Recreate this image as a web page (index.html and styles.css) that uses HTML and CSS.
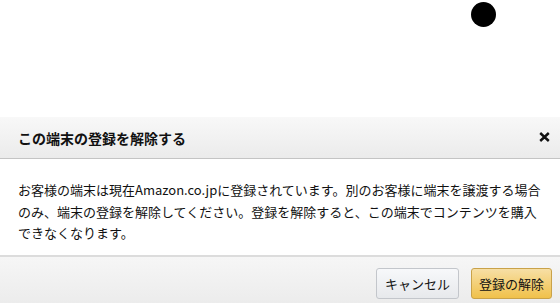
FILE: index.html
```html
<!DOCTYPE html>
<html lang="ja">
<head>
<meta charset="utf-8">
<link rel="stylesheet" href="styles.css">
</head>
<body>
<div class="page">
  <div class="top">
    <span class="dot"></span>
  </div>
  <div class="dialog">
    <div class="header">
      <h1 class="title">この端末の登録を解除する</h1>
      <svg class="close" width="11" height="10" viewBox="0 0 11 10" aria-label="閉じる"><path d="M1.2 1 L9.8 9 M9.8 1 L1.2 9" stroke="#111" stroke-width="2.4" stroke-linecap="butt" fill="none"/></svg>
    </div>
    <div class="body">
      <p class="msg">お客様の端末は現在Amazon.co.jpに登録されています。別のお客様に端末を譲渡する場合のみ、端末の登録を解除してください。登録を解除すると、この端末でコンテンツを購入できなくなります。</p>
    </div>
    <div class="footer">
      <button class="btn btn-secondary">キャンセル</button>
      <button class="btn btn-primary">登録の解除</button>
    </div>
  </div>
</div>
</body>
</html>
```

FILE: styles.css
```css
html, body {
  margin: 0;
  padding: 0;
  background: #fff;
}
body {
  font-family: "Noto Sans CJK JP", "Noto Sans", sans-serif;
  color: #111;
  width: 560px;
  height: 303px;
  overflow: hidden;
}
.page {
  display: flex;
  flex-direction: column;
  height: 303px;
}
.top {
  height: 117px;
  display: flex;
  justify-content: flex-end;
  padding: 2px 64px 0 0;
  box-sizing: border-box;
}
.dot {
  width: 25px;
  height: 25px;
  border-radius: 50%;
  background: #000;
}
.dialog {
  flex: 1;
  display: flex;
  flex-direction: column;
}
.header {
  height: 42px;
  box-sizing: border-box;
  display: flex;
  align-items: center;
  justify-content: space-between;
  padding: 0 10px 0 18px;
  background: linear-gradient(#f8f8f8, #ebebeb);
  border-bottom: 1px solid #c4c4c4;
}
.title {
  margin: 0;
  font-size: 14px;
  font-weight: bold;
  color: #111;
  line-height: 1;
}
.close {
  display: block;
  margin-top: -2px;
}
.body {
  padding: 20px 16px 0 18px;
  height: 96px;
  box-sizing: border-box;
}
.msg {
  margin: 0;
  font-size: 13px;
  line-height: 21.5px;
  color: #111;
}
.footer {
  flex: 1;
  display: flex;
  justify-content: flex-end;
  align-items: flex-start;
  gap: 12px;
  padding: 11px 8px 0 0;
  border-top: 2px solid #dcdcdc;
  background: linear-gradient(#f6f6f6, #ececec);
}
.btn {
  height: 31px;
  box-sizing: border-box;
  border-radius: 3px;
  font-family: "Noto Sans CJK JP", sans-serif;
  font-size: 13px;
  color: #111;
  padding: 0;
  line-height: 1;
  white-space: nowrap;
}
.btn-secondary {
  width: 83px;
  background: linear-gradient(#f7f8fa, #e7e9ec);
  border: 1px solid #c3c6cb;
}
.btn-primary {
  width: 81px;
  background: linear-gradient(#f7dfa5, #f0c14b);
  border: 1px solid #c9a249;
}
```
